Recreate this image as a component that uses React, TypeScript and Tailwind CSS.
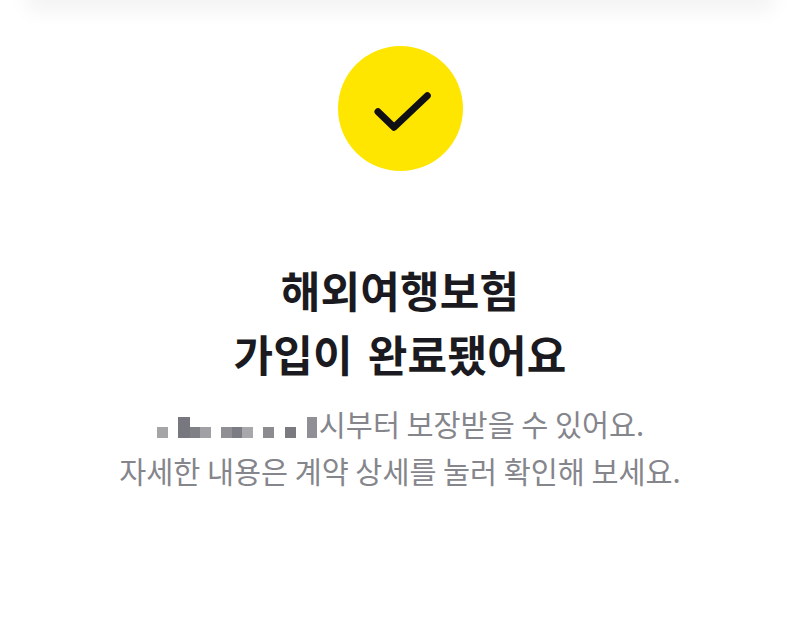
const FONT = "font-['Noto_Sans_CJK_KR','Noto_Sans',sans-serif]"

function CheckBadge() {
  return (
    <div className="flex h-[125px] w-[125px] items-center justify-center rounded-full bg-[#ffe600]">
      <svg width="125" height="125" viewBox="0 0 125 125" fill="none">
        <path
          d="M40 65.7 L56 81.3 L89.3 49.7"
          stroke="#101014"
          strokeWidth="7"
          strokeLinecap="round"
          strokeLinejoin="round"
        />
      </svg>
    </div>
  )
}

// 가려진 날짜 자리 (모자이크)
function Mosaic() {
  return (
    <span className="mt-[8px] mr-[2px] ml-[1px] inline-flex h-[21px] items-end blur-[0.4px]">
      <span className="h-[11px] w-[11px] bg-[#a5a5a8]" />
      <span className="ml-[10px] h-[21px] w-[12px] bg-[#77777f]" />
      <span className="h-[11px] w-[10px] bg-[#808087]" />
      <span className="h-[11px] w-[11px] bg-[#a0a0a5]" />
      <span className="ml-[10px] h-[11px] w-[11px] bg-[#8f8f94]" />
      <span className="h-[11px] w-[10px] bg-[#7c7c84]" />
      <span className="h-[11px] w-[11px] bg-[#a8a8ac]" />
      <span className="ml-[10px] h-[11px] w-[11px] bg-[#8c8c90]" />
      <span className="ml-[11px] h-[11px] w-[11px] bg-[#7a7a80]" />
      <span className="ml-[11px] h-[21px] w-[10px] bg-[#8f8f95]" />
    </span>
  )
}

export default function App() {
  return (
    <div className={`relative flex h-[625px] w-[800px] flex-col items-center overflow-hidden bg-white ${FONT}`}>
      <div className="absolute -top-[10px] left-[34px] right-[34px] h-[10px] shadow-[0_3px_20px_8px_rgba(0,0,0,0.05)]" />
      <div className="mt-[46px]">
        <CheckBadge />
      </div>
      <h1 className="mt-[86px] text-center text-[43px] leading-[64px] font-bold tracking-[0.2px] [word-spacing:5px] text-[#1a1a20]">
        해외여행보험
        <br />
        가입이 완료됐어요
      </h1>
      <div className="mt-[15px] text-center text-[29.4px] leading-[47px] text-[#85858c]">
        <p className="flex items-center justify-center">
          <Mosaic />
          <span>시부터 보장받을 수 있어요.</span>
        </p>
        <p>자세한 내용은 계약 상세를 눌러 확인해 보세요.</p>
      </div>
    </div>
  )
}
